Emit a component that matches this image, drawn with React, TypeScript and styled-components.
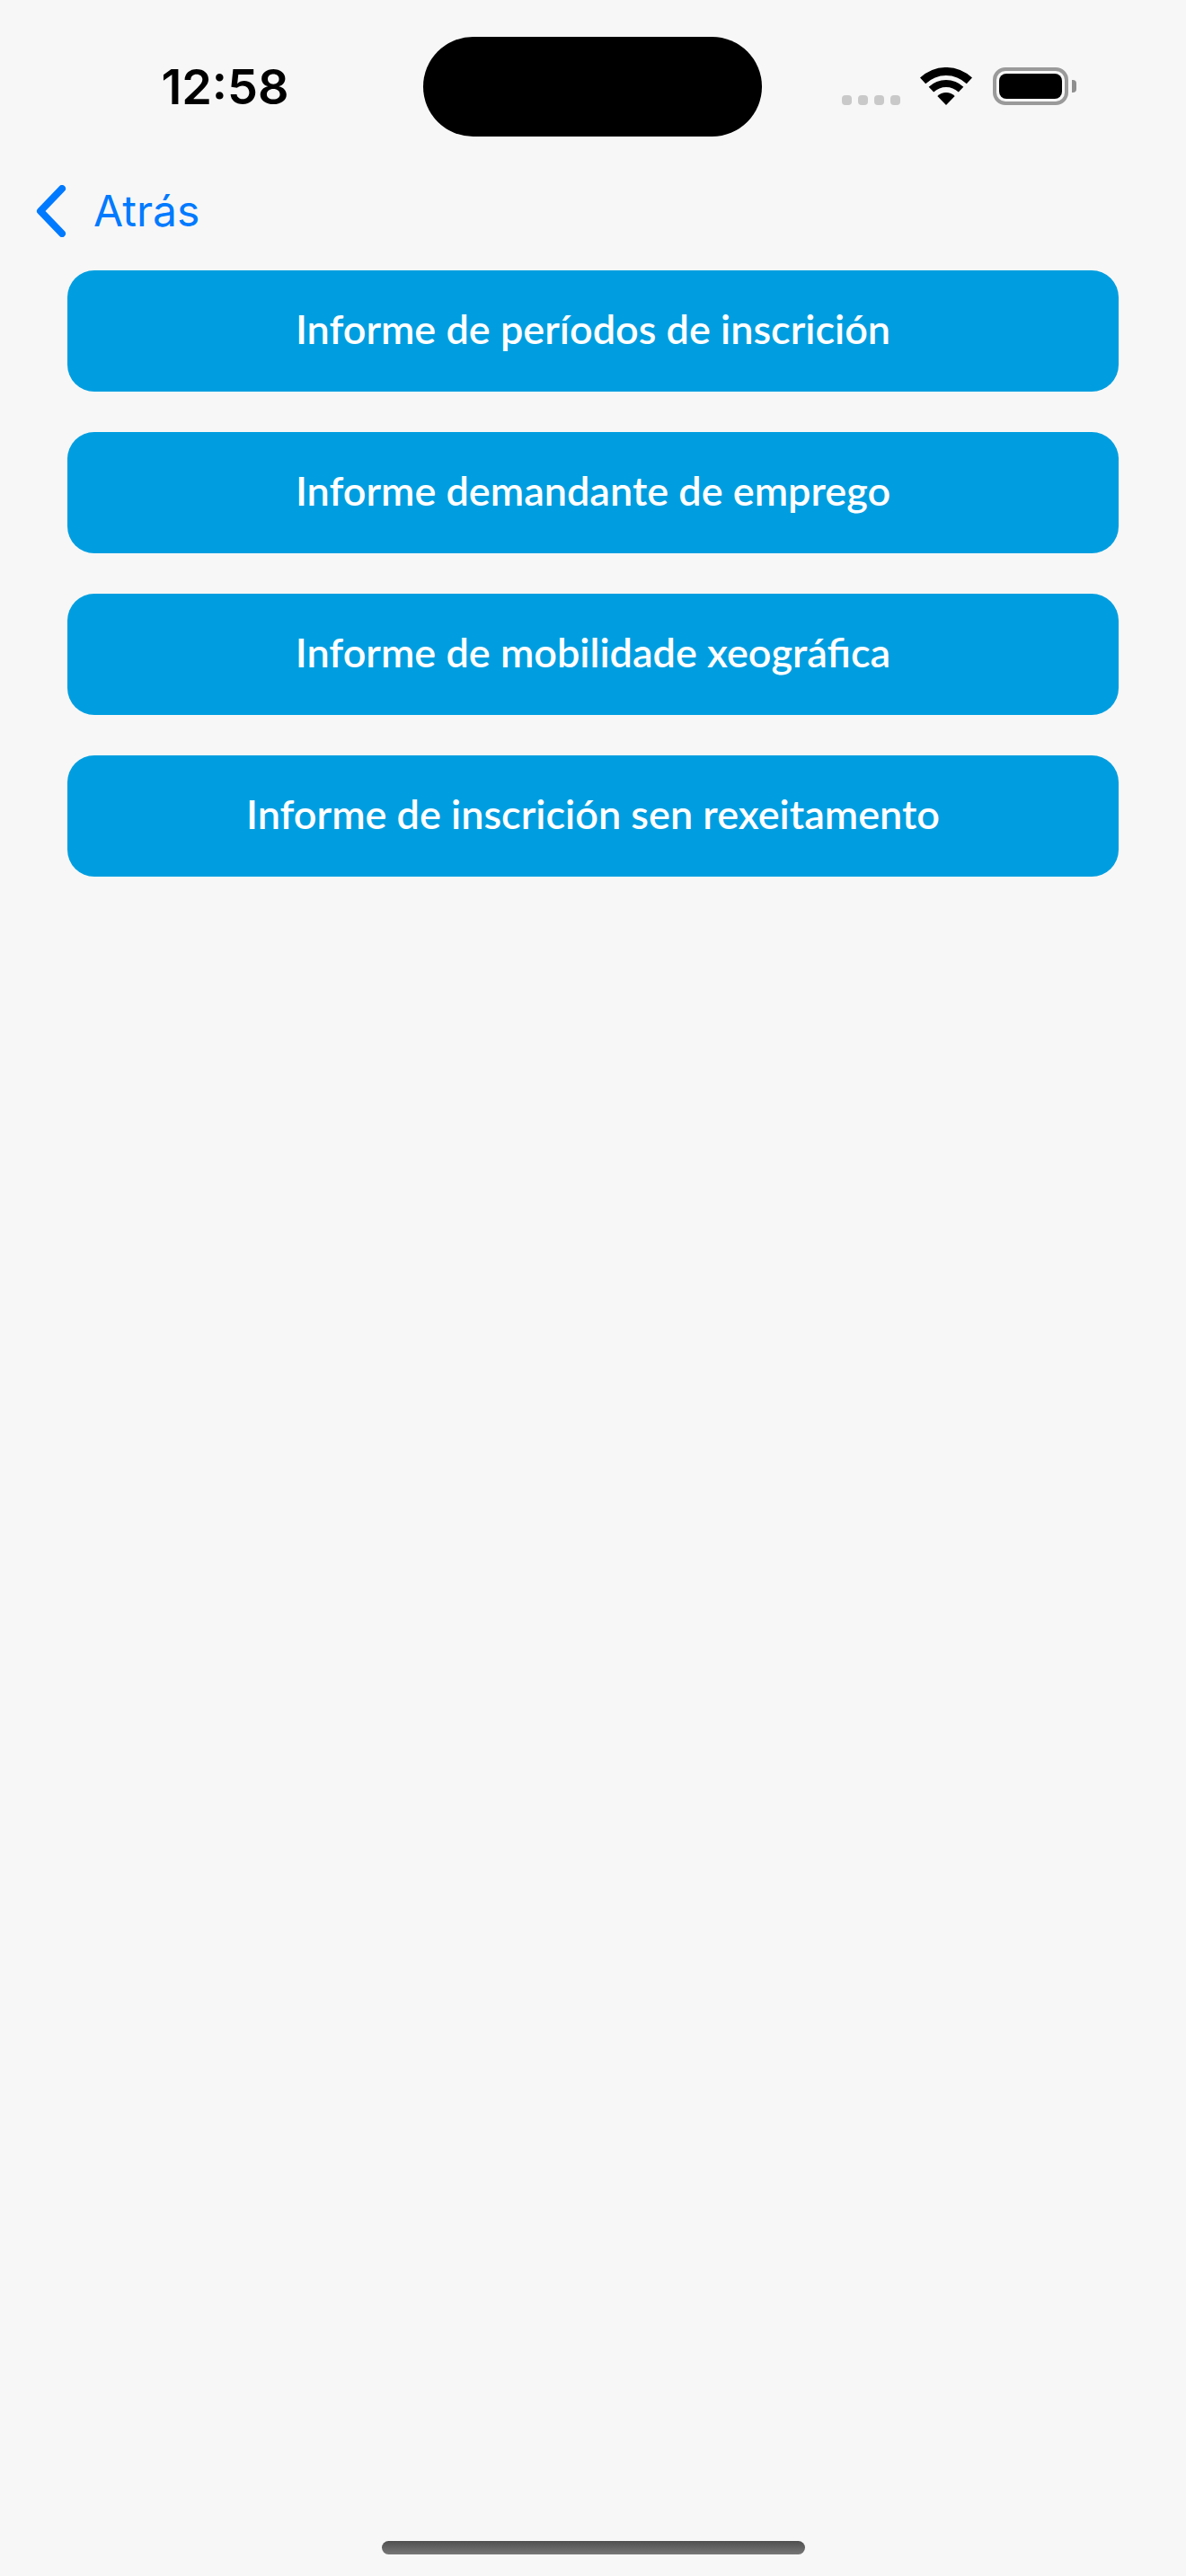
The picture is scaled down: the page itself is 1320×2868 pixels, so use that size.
import React from "react";
import styled, { createGlobalStyle } from "styled-components";

const reports = [
	"Informe de períodos de inscrición",
	"Informe demandante de emprego",
	"Informe de mobilidade xeográfica",
	"Informe de inscrición sen rexeitamento",
];

const App: React.FC = () => {
	return (
		<Page>
			<GlobalStyle />
			<StatusBar>
				<Time>12:58</Time>
				<Island />
				<StatusIcons>
					<SignalDots>
						<Dot />
						<Dot />
						<Dot />
						<Dot />
					</SignalDots>
					<svg width="58" height="42" viewBox="0 0 58 42" aria-hidden="true">
						<path d="M0 11.6A42 42 0 0 1 58 11.6L51.8 18.15A33 33 0 0 0 6.2 18.15Z" />
						<path d="M9.65 21.8A28 28 0 0 1 48.35 21.8L42.8 27.55A20 20 0 0 0 15.2 27.55Z" />
						<path d="M19.33 31.9A14 14 0 0 1 38.67 31.9L29 42Z" />
					</svg>
					<Battery>
						<BatteryShell>
							<BatteryFill />
						</BatteryShell>
						<BatteryNub />
					</Battery>
				</StatusIcons>
			</StatusBar>
			<NavBar>
				<svg width="34" height="58" viewBox="0 0 34 58" aria-hidden="true">
					<path
						d="M29 4L5 29L29 54"
						fill="none"
						stroke="#007aff"
						strokeWidth="8"
						strokeLinecap="round"
						strokeLinejoin="round"
					/>
				</svg>
				<BackLabel>Atrás</BackLabel>
			</NavBar>
			<ReportList>
				{reports.map((report) => (
					<ReportButton key={report} type="button">
						{report}
					</ReportButton>
				))}
			</ReportList>
			<HomeIndicator />
		</Page>
	);
};

export default App;

const GlobalStyle = createGlobalStyle`
	html, body {
		margin: 0;
		padding: 0;
		background: #f7f7f7;
	}
`;

const Page = styled.div`
	display: flex;
	flex-direction: column;
	width: 1320px;
	height: 2868px;
	overflow: hidden;
	background: #f7f7f7;
	font-family: Inter, "Liberation Sans", sans-serif;
`;

const StatusBar = styled.header`
	display: grid;
	grid-template-columns: 471px 377px 1fr;
	height: 111px;
	padding-top: 41px;
`;

const Time = styled.div`
	align-self: center;
	padding-left: 30px;
	text-align: center;
	font-size: 54px;
	line-height: 1;
	font-weight: 600;
	color: #000;
`;

const Island = styled.div`
	height: 111px;
	border-radius: 56px;
	background: #000;
`;

const StatusIcons = styled.div`
	display: flex;
	align-items: flex-end;
	height: 42px;
	margin-top: 34px;
	padding-left: 89px;
	svg {
		display: block;
		margin-left: 22px;
		fill: #000;
	}
`;

const SignalDots = styled.div`
	display: flex;
	gap: 7px;
`;

const Dot = styled.span`
	width: 11px;
	height: 11px;
	border-radius: 4px;
	background: #c9c9c9;
`;

const Battery = styled.div`
	display: flex;
	align-items: center;
	gap: 4px;
	margin-left: 23px;
	height: 42px;
`;

const BatteryShell = styled.div`
	box-sizing: border-box;
	width: 84px;
	height: 42px;
	padding: 3px;
	border: 4px solid #9a9a9a;
	border-radius: 14px;
`;

const BatteryFill = styled.div`
	height: 100%;
	border-radius: 8px;
	background: #000;
`;

const BatteryNub = styled.div`
	width: 5px;
	height: 14px;
	border-radius: 0 4px 4px 0;
	background: #8f8f8f;
`;

const NavBar = styled.nav`
	display: flex;
	align-items: center;
	gap: 30px;
	padding: 54px 0 37px 40px;
	svg {
		display: block;
	}
`;

const BackLabel = styled.span`
	font-size: 48px;
	line-height: 58px;
	font-weight: 400;
	color: #007aff;
`;

const ReportList = styled.main`
	display: flex;
	flex-direction: column;
	gap: 45px;
	padding: 0 75px;
`;

const ReportButton = styled.button`
	height: 135px;
	padding: 0 0 5px;
	border: none;
	border-radius: 30px;
	background: #009ee0;
	color: #fff;
	font-family: Lato, "Open Sans", sans-serif;
	font-size: 45px;
	font-weight: 600;
	text-align: center;
`;

const HomeIndicator = styled.div`
	width: 471px;
	height: 15px;
	margin: auto auto 24px;
	border-radius: 8px;
	background: linear-gradient(#4f4f4f, #777);
`;
